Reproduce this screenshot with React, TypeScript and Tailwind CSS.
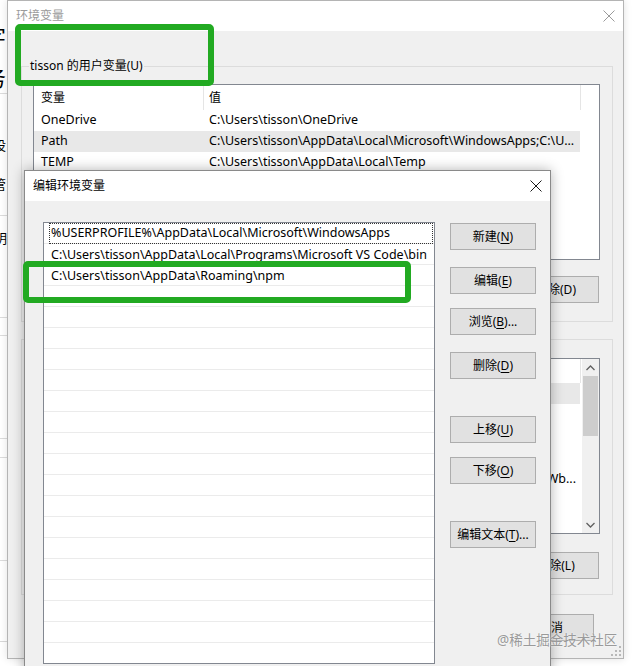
import React from "react";

function Btn({ children, className = "" }: { children: React.ReactNode; className?: string }) {
  return (
    <div
      className={
        "flex h-[27px] w-[86px] shrink-0 items-center justify-center border border-[#adadad] bg-[#e1e1e1] text-[12px] leading-none text-black " +
        className
      }
    >
      {children}
    </div>
  );
}

function U({ c }: { c: string }) {
  return <span className="underline decoration-1 underline-offset-2">{c}</span>;
}

function CloseX({ color }: { color: string }) {
  return (
    <svg width="12" height="12" viewBox="0 0 12 12">
      <path d="M0.5 0.5L11.5 11.5M11.5 0.5L0.5 11.5" stroke={color} strokeWidth="1" fill="none" />
    </svg>
  );
}

function Grip() {
  const pts = [
    [8, 0],
    [8, 4],
    [4, 4],
    [8, 8],
    [4, 8],
    [0, 8],
  ];
  return (
    <svg width="10" height="10" viewBox="0 0 10 10">
      {pts.map(([x, y], i) => (
        <rect key={i} x={x} y={y} width="2" height="2" fill="#b8b8b8" />
      ))}
    </svg>
  );
}

function Chevron({ up }: { up?: boolean }) {
  return (
    <svg width="9" height="6" viewBox="0 0 9 6">
      <path d={up ? "M0.5 5L4.5 1L8.5 5" : "M0.5 1L4.5 5L8.5 1"} stroke="#606060" strokeWidth="1.3" fill="none" />
    </svg>
  );
}

const userVars = [
  ["OneDrive", "C:\\Users\\tisson\\OneDrive"],
  ["Path", "C:\\Users\\tisson\\AppData\\Local\\Microsoft\\WindowsApps;C:\\U..."],
  ["TEMP", "C:\\Users\\tisson\\AppData\\Local\\Temp"],
  ["TMP", "C:\\Users\\tisson\\AppData\\Local\\Temp"],
];

const sysVars = [
  ["ComSpec", "C:\\WINDOWS\\system32\\cmd.exe"],
  ["DriverData", "C:\\Windows\\System32\\Drivers"],
  ["NUMBER_OF_PROCESSORS", "8"],
  ["OS", "Windows_NT"],
  ["Path", "C:\\WINDOWS\\system32;C:\\WINDOWS;C:\\WINDOWS\\System32\\Wb..."],
  ["PATHEXT", ".COM;.EXE;.BAT;.CMD;.VBS;.VBE"],
  ["PROCESSOR_ARCHITECTURE", "AMD64"],
];

const editRows = [
  "%USERPROFILE%\\AppData\\Local\\Microsoft\\WindowsApps",
  "C:\\Users\\tisson\\AppData\\Local\\Programs\\Microsoft VS Code\\bin",
  "C:\\Users\\tisson\\AppData\\Roaming\\npm",
];

export default function App() {
  return (
    <div className="relative h-[666px] w-[632px] overflow-hidden bg-white font-['Noto_Sans','Noto_Sans_CJK_SC',sans-serif] text-black">
      {/* back window strip */}
      <div className="absolute left-0 top-0 h-[642px] w-[7px] overflow-hidden border-b border-[#d8d8d8] bg-white">
        <span className="absolute left-[-16px] top-[25px] text-[22px] leading-none">字</span>
        <span className="absolute left-[-16px] top-[66px] text-[22px] leading-none">务</span>
        <div className="absolute left-0 top-[93px] h-px w-full bg-[#dcdcdc]" />
        <span className="absolute left-[-7px] top-[139px] text-[13px] leading-none">设</span>
        <span className="absolute left-[-7px] top-[178px] text-[13px] leading-none">管</span>
        <div className="absolute left-0 top-[215px] h-px w-full bg-[#dcdcdc]" />
        <span className="absolute left-[-6px] top-[232px] text-[13px] leading-none">明</span>
        <div className="absolute left-0 top-[317px] h-px w-full bg-[#dcdcdc]" />
        <div className="absolute left-0 top-[335px] h-px w-full bg-[#dcdcdc]" />
        <div className="absolute left-0 top-[438px] h-px w-full bg-[#dcdcdc]" />
        <div className="absolute left-0 top-[457px] h-px w-full bg-[#dcdcdc]" />
        <div className="absolute left-0 top-[560px] h-px w-full bg-[#dcdcdc]" />
      </div>

      {/* environment variables window (inactive, behind) */}
      <div className="absolute left-[7px] top-0 flex h-[659px] w-[617px] flex-col border border-[#b4b4b4] bg-[#f0f0f0] shadow-[0_0_8px_rgba(0,0,0,0.12)]">
        <div className="flex h-[30px] shrink-0 items-center justify-between bg-white pl-[8px] pr-[8px]">
          <span className="text-[12px] text-[#9a9a9a]">环境变量</span>
          <CloseX color="#9a9a9a" />
        </div>

        {/* user variables group */}
        <div className="relative ml-[13px] mt-[35px] w-[592px] border border-[#dcdcdc] pb-[18px]">
          <span className="absolute left-[7px] top-[-10px] bg-[#f0f0f0] px-px text-[12px] leading-[18px]">
            tisson 的用户变量(U)
          </span>
          <div className="ml-[11px] mt-[17px] h-[176px] w-[567px] overflow-hidden border border-[#828790] bg-white text-[12.5px]">
            <div className="flex h-[25px] text-[12px]">
              <div className="flex w-[170px] items-center border-r border-[#e5e5e5] pl-[7px]">变量</div>
              <div className="flex w-[377px] items-center border-r border-[#e5e5e5] pl-[5px]">值</div>
            </div>
            {userVars.map(([k, v]) => (
              <div
                key={k}
                className={"flex h-[21px] w-[546px] items-center whitespace-nowrap " + (k === "Path" ? "bg-[#e8e8e8]" : "")}
              >
                <div className="w-[170px] pl-[7px]">{k}</div>
                <div className="w-[376px] overflow-hidden pl-[5px]">{v}</div>
              </div>
            ))}
          </div>
          <div className="mt-[16px] flex justify-end gap-[8px] pr-[13px]">
            <Btn>
              新建(<U c="W" />)...
            </Btn>
            <Btn>
              编辑(<U c="I" />)...
            </Btn>
            <Btn>删除(D)</Btn>
          </div>
        </div>

        {/* system variables group */}
        <div className="relative ml-[13px] mt-[17px] w-[592px] border border-[#dcdcdc] pb-[15px]">
          <span className="absolute left-[7px] top-[-10px] bg-[#f0f0f0] px-px text-[12px] leading-[18px]">
            系统变量(S)
          </span>
          <div className="ml-[11px] mt-[18px] flex h-[176px] w-[567px] overflow-hidden border border-[#828790] bg-white text-[12.5px]">
            <div className="flex-1 overflow-hidden">
              <div className="flex h-[24px] text-[12px]">
                <div className="flex w-[170px] items-center border-r border-[#e5e5e5] pl-[7px]">变量</div>
                <div className="flex w-[377px] items-center border-r border-[#e5e5e5] pl-[5px]">值</div>
              </div>
              {sysVars.map(([k, v], i) => (
                <div
                  key={k}
                  className={"flex h-[21px] w-[546px] items-center whitespace-nowrap " + (i === 0 ? "bg-[#e8e8e8]" : "")}
                >
                  <div className="w-[170px] overflow-hidden pl-[7px]">{k}</div>
                  <div
                    className={
                      "flex w-[376px] overflow-hidden " + (k === "Path" ? "justify-end pr-[4px] pt-[3px]" : "pl-[5px]")
                    }
                  >
                    {v}
                  </div>
                </div>
              ))}
            </div>
            <div className="flex w-[17px] flex-col bg-[#f0f0f0]">
              <div className="flex h-[17px] items-center justify-center">
                <Chevron up />
              </div>
              <div className="mx-px h-[60px] bg-[#cdcdcd]" />
              <div className="flex-1" />
              <div className="flex h-[17px] items-center justify-center">
                <Chevron />
              </div>
            </div>
          </div>
          <div className="mt-[18px] flex justify-end gap-[8px] pr-[13px]">
            <Btn>
              新建(<U c="W" />)...
            </Btn>
            <Btn>
              编辑(<U c="I" />)...
            </Btn>
            <Btn>删除(L)</Btn>
          </div>
        </div>

        <div className="mt-[19px] flex justify-end gap-[8px] pr-[29px]">
          <Btn>确定</Btn>
          <Btn>取消</Btn>
        </div>

        <div className="absolute bottom-[2px] right-[2px]">
          <Grip />
        </div>
      </div>

      {/* edit environment variable window (active, front) */}
      <div className="absolute left-[24px] top-[170px] flex h-[520px] w-[527px] flex-col border border-[#8a8a8a] bg-[#f0f0f0] shadow-[0_0_12px_rgba(0,0,0,0.3)]">
        <div className="flex h-[30px] shrink-0 items-center justify-between bg-white pl-[8px] pr-[8px]">
          <span className="text-[12px] text-black">编辑环境变量</span>
          <CloseX color="#1a1a1a" />
        </div>
        <div className="flex pl-[18px] pt-[21px]">
          <div className="h-[442px] w-[392px] shrink-0 overflow-hidden border border-[#828790] bg-white text-[12.5px]">
            {Array.from({ length: 22 }).map((_, i) => (
              <div key={i} className="h-[21px] border-b border-[#ebebeb]">
                {i === 0 ? (
                  <div className="ml-[5px] mr-px flex h-[21px] items-center whitespace-nowrap border border-dotted border-[#333] pl-px">
                    {editRows[0]}
                  </div>
                ) : (
                  <div className="flex h-[20px] items-center whitespace-nowrap pl-[7px] pt-[3px]">{editRows[i] ?? ""}</div>
                )}
              </div>
            ))}
          </div>
          <div className="ml-[15px] flex flex-col pt-px">
            <Btn>
              新建(<U c="N" />)
            </Btn>
            <Btn className="mt-[17px]">
              编辑(<U c="E" />)
            </Btn>
            <Btn className="mt-[14px]">
              浏览(<U c="B" />)...
            </Btn>
            <Btn className="mt-[17px]">
              删除(<U c="D" />)
            </Btn>
            <Btn className="mt-[37px]">
              上移(<U c="U" />)
            </Btn>
            <Btn className="mt-[14px]">
              下移(<U c="O" />)
            </Btn>
            <Btn className="mt-[37px]">
              编辑文本(<U c="T" />)...
            </Btn>
          </div>
        </div>
      </div>

      {/* green annotation boxes */}
      <div className="pointer-events-none absolute left-[15px] top-[24px] h-[62px] w-[199px] rounded-[5px] border-[6px] border-[#22aa22]" />
      <div className="pointer-events-none absolute left-[23px] top-[261px] h-[42px] w-[388px] rounded-[5px] border-[6px] border-[#22aa22]" />

      {/* watermark */}
      <div className="pointer-events-none absolute left-[497px] top-[631px] whitespace-nowrap text-[13.5px] leading-[18px] text-[#9a9a9a] [text-shadow:0_0_2px_rgba(255,255,255,0.9)]">
        @稀土掘金技术社区
      </div>
    </div>
  );
}
